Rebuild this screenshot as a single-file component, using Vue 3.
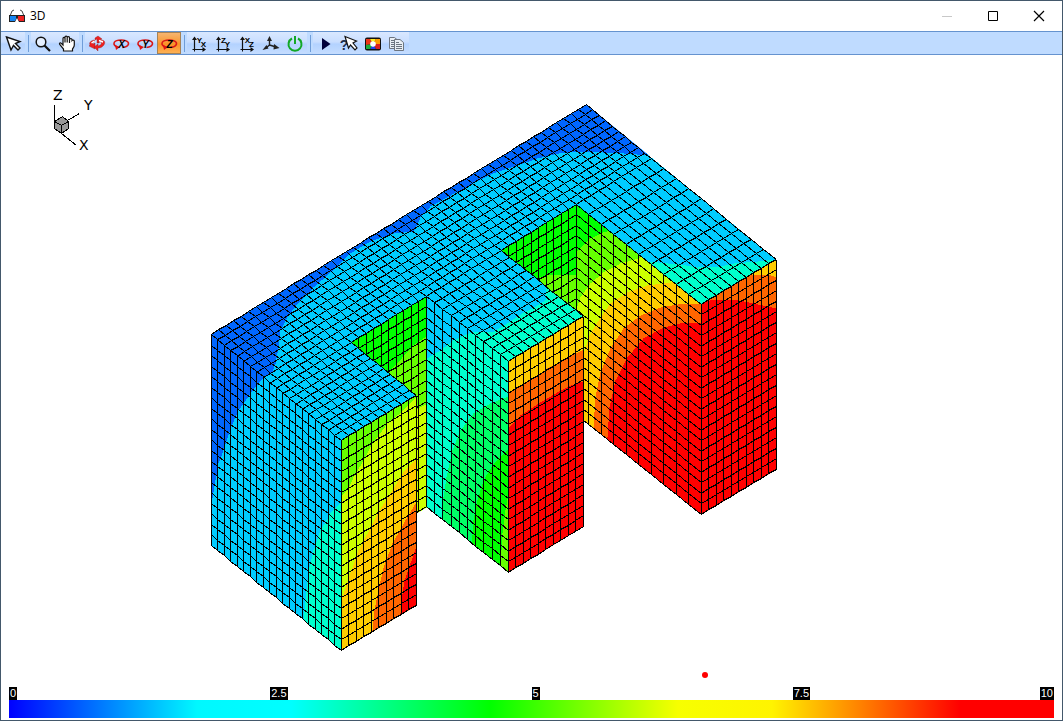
<script setup>
const C = {
  blue: '#0066ff', sky: '#00ccff', aqua: '#00ffcc', mint: '#00ff66', green: '#00ff00',
  lime: '#66ff00', chartreuse: '#ccff00', amber: '#ffcc00', orange: '#ff6600', red: '#ff0000'
}

// Each face: outline, base colour, contour bands painted in order, and grid patches.
// A patch is [corner, corner along u, opposite corner, corner along v, cells u, cells v].
const faces = [
  {
    id: 'notch-left-back', outline: '351,342 426,296 426,507 351,553', base: C.lime,
    bands: [
      [C.green, '340,320 427,290 427,335 413,345 402,357 390,370 370,395 340,400'],
      [C.chartreuse, '427,403 417,408 400,418 350,440 350,560 427,510']
    ],
    grids: [[[351, 342], [426, 296], [426, 506], [351, 552], 10, 20]]
  },
  {
    id: 'notch-right-back', outline: '501,250 576,204 576,415 501,461', base: C.green,
    bands: [[C.lime, '577,275 563,274 550,274 540,277 520,290 500,320 500,461 577,415']],
    grids: [[[501, 250], [576, 204], [576, 414], [501, 460], 10, 20]]
  },
  {
    id: 'right-leg-side', outline: '576,204 701,304 701,514 576,414', base: C.green,
    bands: [
      [C.lime, '575,252 590,238 603,232 613,229 701,290 701,515 575,415'],
      [C.chartreuse, '575,312 580,297 590,283 603,272 620,263 638,258 642,254 701,300 701,515 575,415'],
      [C.amber, '577,380 583,353 590,333 600,317 610,303 627,292 647,285 670,282 674,280 701,300 701,515 577,415'],
      [C.orange, '593,440 593,427 595,397 600,372 610,348 623,328 640,315 660,307 683,303 701,304 701,520'],
      [C.red, '606,450 607,437 609,407 615,380 627,357 643,338 663,327 683,322 701,322 701,520']
    ],
    grids: [[[576, 204], [701, 304], [701, 514], [576, 414], 10, 20]]
  },
  {
    id: 'middle-leg-side', outline: '426,296 508,361 508,572 426,506', base: C.aqua,
    bands: [
      [C.sky, '425,359 440,350 453,340 468,333 476,331 425,290'],
      [C.mint, '508,396 490,403 473,413 460,430 452,450 446,477 443,497 442,530 508,580'],
      [C.green, '508,448 493,463 483,480 477,500 473,520 471,550 508,580'],
      [C.lime, '508,493 505,510 502,533 501,550 500,575 508,580']
    ],
    grids: [[[426, 296], [508, 361], [508, 572], [426, 506], 10, 20]]
  },
  {
    id: 'top',
    outline: '211,334 586,104 776,259 701,304 576,204 501,250 583,316 508,361 426,296 351,342 416,395 341,440',
    base: C.sky,
    bands: [
      [C.blue, '649,155 623,153 602,152 577,151 558,153 537,158 510,167 493,173 480,179 452,194 430,206 420,217 413,231 393,233 370,241 350,253 330,272 313,287 297,303 287,317 280,330 278,347 275,363 272,371 263,378 200,334 586,90 660,150'],
      [C.aqua, '546,285 545,300 537,305 523,312 507,323 493,331 480,332 470,331 508,365 590,316'],
      [C.aqua, '648,261 667,263 680,264 697,267 720,266 733,263 757,261 776,259 701,308']
    ],
    grids: [
      [[211, 334], [586, 104], [651, 158], [276, 388], 50, 10],
      [[276, 388], [351, 342], [416, 395], [341, 440], 10, 10],
      [[426, 296], [501, 250], [583, 316], [508, 361], 10, 10],
      [[576, 204], [651, 158], [776, 259], [701, 304], 10, 10]
    ]
  },
  {
    id: 'left-side', outline: '211,334 341,440 341,650 211,545', base: C.sky,
    bands: [
      [C.blue, '265,376 262,378 250,393 238,410 230,428 223,450 218,463 215,480 212,498 208,510 208,330'],
      [C.aqua, '342,500 330,513 320,530 313,550 308,570 306,590 303,620 303,630 342,660']
    ],
    grids: [[[211, 334], [341, 440], [341, 650], [211, 545], 20, 20]]
  },
  {
    id: 'left-leg-front', outline: '341,440 416,395 416,605 341,650', base: C.chartreuse,
    bands: [
      [C.lime, '340,496 347,490 353,477 363,460 372,443 387,423 403,410 415,397 410,390 340,430'],
      [C.amber, '417,457 404,470 390,493 377,513 367,533 358,550 350,573 342,597 340,605 340,660 417,620'],
      [C.orange, '417,500 405,520 392,543 383,567 378,590 374,610 371,640 417,620'],
      [C.red, '417,543 410,563 404,580 401,600 399,625 417,620']
    ],
    grids: [[[341, 440], [416, 395], [416, 605], [341, 650], 10, 20]]
  },
  {
    id: 'middle-leg-front', outline: '508,361 583,316 583,526 508,572', base: C.amber,
    bands: [
      [C.orange, '508,393 527,382 547,368 567,357 583,349 583,530 508,580'],
      [C.red, '508,427 520,415 540,402 557,392 570,385 583,381 583,530 508,580']
    ],
    grids: [[[508, 361], [583, 316], [583, 526], [508, 572], 10, 20]]
  },
  {
    id: 'right-leg-front', outline: '701,304 776,259 776,469 701,514', base: C.orange,
    bands: [
      [C.amber, '743,277 753,274 767,274 776,277 776,255'],
      [C.red, '701,304 706,301 713,299 733,299 753,303 776,308 776,480 701,520']
    ],
    grids: [[[701, 304], [776, 259], [776, 469], [701, 514], 10, 20]]
  }
]

// The small bias keeps half-way nodes of one grid line on the same side.
const snap = value => Math.round(value - 0.001)

function gridPath([a, b, c, d, nu, nv]) {
  const node = (i, j) => {
    const u = i / nu
    const v = j / nv
    return [0, 1].map(k =>
      snap((1 - v) * ((1 - u) * a[k] + u * b[k]) + v * ((1 - u) * d[k] + u * c[k]))
    ).join(' ')
  }
  const lines = []
  for (let i = 0; i <= nu; i++) {
    lines.push('M' + Array.from({ length: nv + 1 }, (_, j) => node(i, j)).join('L'))
  }
  for (let j = 0; j <= nv; j++) {
    lines.push('M' + Array.from({ length: nu + 1 }, (_, i) => node(i, j)).join('L'))
  }
  return lines.join('')
}

const groups = [
  [{ icon: 'select', label: 'Select' }],
  [{ icon: 'zoom', label: 'Zoom' }, { icon: 'pan', label: 'Pan' }],
  [
    { icon: 'rotate', label: 'Rotate' },
    { icon: 'spin', letter: 'X', label: 'Rotate about X' },
    { icon: 'spin', letter: 'Y', label: 'Rotate about Y' },
    { icon: 'spin', letter: 'Z', label: 'Rotate about Z', active: true }
  ],
  [
    { icon: 'plane', axes: ['Y', 'X'], label: 'XY view' },
    { icon: 'plane', axes: ['Z', 'Y'], label: 'YZ view' },
    { icon: 'plane', axes: ['X', 'Z'], label: 'ZX view' },
    { icon: 'iso', label: 'Isometric view' },
    { icon: 'power', label: 'Reset view' }
  ],
  [
    { icon: 'play', label: 'Play' },
    { icon: 'query', label: 'Query value' },
    { icon: 'palette', label: 'Colours' },
    { icon: 'copy', label: 'Copy' }
  ]
]

const ticks = ['0', '2.5', '5', '7.5', '10']
</script>

<template>
  <div class="window">
    <header class="titlebar">
      <svg class="logo" width="18" height="16" viewBox="0 0 18 16" aria-hidden="true">
        <path d="M2 8L4 3L6 2M16 8L14 3L12 2" fill="none" stroke="#444" />
        <path d="M1 7H17V14H11L9 10L7 14H1Z" fill="#222" />
        <path d="M2 8H8V11L7 13H2Z" fill="#1685f0" />
        <path d="M10 8H16V13H11L10 11Z" fill="#ee2020" />
      </svg>
      <h1>3D</h1>
      <div class="controls">
        <button type="button" aria-label="Minimize" disabled>
          <svg width="12" height="12" viewBox="0 0 12 12"><path d="M1 6.500H11" stroke="#c8c8c8" /></svg>
        </button>
        <button type="button" aria-label="Maximize">
          <svg width="12" height="12" viewBox="0 0 12 12"><path d="M1.500 1.500H10.500V10.500H1.500Z" fill="none" stroke="#000" /></svg>
        </button>
        <button type="button" aria-label="Close">
          <svg width="12" height="12" viewBox="0 0 12 12"><path d="M1 1L11 11M11 1L1 11" stroke="#000" stroke-width="1.200" /></svg>
        </button>
      </div>
    </header>

    <nav class="toolbar" aria-label="View tools">
      <div v-for="(group, g) in groups" :key="g" class="group">
        <button
          v-for="tool in group" :key="tool.label" type="button" class="tool"
          :class="{ active: tool.active }" :aria-label="tool.label" :aria-pressed="tool.active ? 'true' : undefined"
        >
          <svg width="24" height="22" viewBox="0 0 24 22" aria-hidden="true">
            <path v-if="tool.icon === 'select'" d="M5.500 5L19 9.500L14.500 11.500L19 16L17 18L12.500 13.500L10 18Z" fill="#fff" stroke="#111" stroke-width="1.400" />

            <g v-else-if="tool.icon === 'zoom'" fill="none" stroke="#111">
              <circle cx="10" cy="10" r="4.800" stroke-width="1.500" fill="#e4efff" />
              <path d="M13.500 13.500L19 19" stroke-width="2.200" />
            </g>

            <path
              v-else-if="tool.icon === 'pan'"
              d="M8.500 19V17L4.700 12.500C4 11.300 5.300 10.300 6.300 11.300L8 13V6.500C8 5 10 5 10 6.500V10.500V5C10 3.700 12.200 3.700 12.200 5V10.500V5.500C12.200 4.200 14.500 4.200 14.500 5.500V11V7.500C14.500 6.300 17 6.300 17 7.500V8.500C17.500 7.800 19.300 8 19.300 9.300V13C19.300 15 18 16 17.500 17V19Z"
              fill="#fff" stroke="#111" stroke-width="1.200"
            />

            <g v-else-if="tool.icon === 'rotate'" stroke="#8c2020" stroke-width=".4">
              <path d="M10 8L10 6L13 4L17 7L15 8L14 11L12 11L12 7Z" fill="#ef2020" />
              <path d="M9 8C5 9 4 11 5 13L4 14L10 17V11L8 12C7 11 8 10 10 9Z" fill="#ef2020" />
              <path d="M16 8C20 8 21 11 18 14C16 16 14 16 13 16V19L9 15L13 12V14C16 13 17 12 16 10L13 10Z" fill="#ef2020" />
              <path d="M14 8.500L18 10M9.500 9L6.500 11" stroke="#fff" stroke-width="1.500" />
            </g>

            <g v-else-if="tool.icon === 'spin'">
              <path d="M8 15C3.500 13 4 9 9.500 8.300C15 7.500 20 9 19.500 12C19 14 16.500 15.200 13.500 15.500" fill="none" stroke="#d81818" stroke-width="1.500" />
              <path d="M6 13L11 15L7 18Z" fill="#e01212" />
              <text x="12.500" y="15.500" class="spin-letter">{{ tool.letter }}</text>
            </g>

            <g v-else-if="tool.icon === 'plane'">
              <path d="M7.500 7V17.500H17" fill="none" stroke="#111" stroke-width="1.200" />
              <path d="M5 8L7.500 4.500L10 8ZM15.500 15L19 17.500L15.500 20Z" fill="#111" />
              <path d="M5.500 17.500H7.500V19.500" fill="none" stroke="#111" />
              <text x="12.500" y="10.500" class="axis-letter">{{ tool.axes[0] }}</text>
              <text x="16.500" y="15" class="axis-letter">{{ tool.axes[1] }}</text>
            </g>

            <g v-else-if="tool.icon === 'iso'">
              <path d="M10.500 13V7M10.500 13L17 15M10.500 13L7 16" fill="none" stroke="#222" stroke-width="1.400" />
              <path d="M8 9L10.500 4L13 9ZM15 12L20.500 16L14.500 17.500ZM7.500 13L9.500 16.500L3.500 18Z" fill="#222" />
            </g>

            <g v-else-if="tool.icon === 'power'" fill="none" stroke="#12a826" stroke-width="2">
              <path d="M9 6.500A6.500 6.500 0 1 0 15 6.500" />
              <path d="M12 4V12" />
            </g>

            <path v-else-if="tool.icon === 'play'" d="M9 6V18L17.500 12Z" fill="#00003c" />

            <g v-else-if="tool.icon === 'query'">
              <text x="7" y="18" class="question">?</text>
              <path d="M8 4.500L19.500 9L16 11L20 16L18 18L13.500 13L11.500 16Z" fill="#fff" stroke="#111" stroke-width="1.200" />
            </g>

            <g v-else-if="tool.icon === 'palette'">
              <rect x="4" y="5.500" width="16" height="13" rx="2" fill="#111" />
              <path d="M5 7H9L12 12L5 13Z" fill="#ee3415" />
              <path d="M9 7H15L12 12Z" fill="#ffef22" />
              <path d="M15 7H19V12L12 12Z" fill="#ff9b00" />
              <path d="M19 12V17H15L12 12Z" fill="#dc2020" />
              <path d="M15 17H9L12 12Z" fill="#2342ed" />
              <path d="M9 17H5V13L12 12Z" fill="#1dac39" />
              <circle cx="12" cy="12" r="2.800" fill="#fff" />
            </g>

            <g v-else-if="tool.icon === 'copy'" fill="#e9eef4" stroke="#6d7580">
              <path d="M4.500 5.500H9.500L12.500 8V16.500H4.500Z" />
              <path d="M6 8.500H9M6 10.500H9M6 12.500H9M6 14.500H9" />
              <path d="M9.500 7.500H15L18.500 10.500V18.500H9.500Z" />
              <path d="M11 10.500H14M11 12.500H17M11 14.500H17M11 16.500H17" />
            </g>
          </svg>
        </button>
      </div>
    </nav>

    <main class="stage">
      <svg class="scene" viewBox="1 55 1061 632" role="img" aria-label="3D contour plot">
        <defs>
          <clipPath v-for="face in faces" :id="face.id" :key="face.id">
            <polygon :points="face.outline" />
          </clipPath>
        </defs>
        <g transform="translate(.5 .5)" shape-rendering="crispEdges">
          <g v-for="face in faces" :key="face.id">
            <polygon :points="face.outline" :fill="face.base" />
            <g :clip-path="`url(#${face.id})`">
              <polygon v-for="(band, i) in face.bands" :key="i" :points="band[1]" :fill="band[0]" />
            </g>
            <path v-for="(grid, i) in face.grids" :key="i" :d="gridPath(grid)" class="mesh" />
          </g>
        </g>
        <g transform="translate(.5 .5)" shape-rendering="crispEdges" class="triad">
          <path d="M54 104V122M67 120L79 113M61 133L76 145" />
          <path d="M54 121L62 116L68 121V128L61 133L54 128Z" fill="#999" />
          <path d="M54 121L61 125L68 121M61 125V133" />
        </g>
        <g class="triad-labels">
          <text x="53" y="100">Z</text>
          <text x="84" y="110">Y</text>
          <text x="79" y="150">X</text>
        </g>
        <circle cx="705" cy="675" r="3" fill="#f00" />
      </svg>
    </main>

    <footer class="legend">
      <div class="ticks">
        <span v-for="tick in ticks" :key="tick">{{ tick }}</span>
      </div>
      <div class="bar"></div>
    </footer>
  </div>
</template>

<style>
body {
  margin: 0;
}
</style>

<style scoped>
.window {
  box-sizing: border-box;
  min-height: 100vh;
  display: flex;
  flex-direction: column;
  border: 1px solid #43586b;
  background: #fff;
  font-family: "Open Sans", "Noto Sans", sans-serif;
  color: #000;
}
.titlebar {
  display: flex;
  align-items: center;
  height: 30px;
  padding-left: 7px;
}
.logo {
  margin-right: 4px;
}
h1 {
  margin: 0;
  font-size: 12px;
  font-weight: 400;
  line-height: 16px;
}
.controls {
  display: flex;
  margin-left: auto;
}
button {
  display: block;
  padding: 0;
  border: 0;
  background: none;
}
.controls button {
  width: 46px;
  height: 28px;
}
.controls svg {
  display: block;
  margin: auto;
}
.toolbar {
  display: flex;
  gap: 6px;
  border-top: 1px solid #6593cf;
  border-bottom: 1px solid #6593cf;
  background: #bfdbff;
}
.group {
  position: relative;
  display: flex;
  background: linear-gradient(#d9e8ff, #c9deff 45%, #b3d2ff 55%, #c5ddff);
}
.group + .group::before {
  content: "";
  position: absolute;
  left: -3px;
  top: 3px;
  bottom: 2px;
  width: 1px;
  background: #6f9dd9;
}
.tool svg {
  display: block;
}
.tool.active {
  background: linear-gradient(#f5b878, #f99b38 45%, #fb9023 55%, #fdb55b);
  box-shadow: inset 0 0 0 1px #a58255;
}
.spin-letter {
  font: italic bold 10px "Liberation Sans", sans-serif;
  text-anchor: middle;
}
.axis-letter {
  font: bold 8px "Liberation Sans", sans-serif;
  text-anchor: middle;
}
.question {
  font: bold 14px "Liberation Sans", sans-serif;
  text-anchor: middle;
  fill: #1c2f4c;
}
.stage {
  flex: 1;
  display: flex;
  min-height: 0;
}
.scene {
  display: block;
  width: 100%;
}
.mesh,
.triad {
  fill: none;
  stroke: #000;
  stroke-width: 1px;
}
.triad-labels {
  font: 14px "DejaVu Sans", sans-serif;
}
.legend {
  padding: 0 8px 2px;
}
.ticks {
  display: grid;
  grid-template-columns: repeat(4, 1fr);
}
.ticks span {
  grid-row: 1;
  justify-self: start;
  padding: 0 1px;
  background: #000;
  color: #fff;
  font: 11px/13px "Liberation Sans", sans-serif;
}
.ticks span:nth-child(1) {
  grid-column: 1;
}
.ticks span:nth-child(2) {
  grid-column: 2;
}
.ticks span:nth-child(3) {
  grid-column: 3;
}
.ticks span:nth-child(n + 4) {
  grid-column: 4;
}
.ticks span:last-child {
  justify-self: end;
}
.bar {
  height: 18px;
  background: linear-gradient(90deg, #00f, #00f8ff 18%, #0ff 27%, #0f0 46%, #f7ff00 64%, #fff400 73%, #f00 91%);
}
</style>
